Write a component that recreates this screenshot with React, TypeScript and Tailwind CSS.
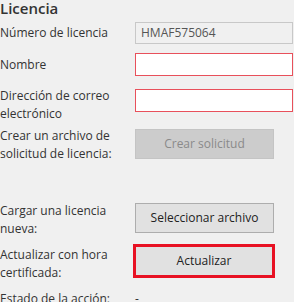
export default function App() {
  const font = { fontFamily: '"Open Sans", "Noto Sans", sans-serif' };
  return (
    <div className="w-[294px] h-[302px] overflow-hidden bg-[#f0f0f0] text-[12px] leading-[18px] text-[#333]" style={font}>
      <h2 className="text-[15px] font-semibold leading-[17px] text-[#333]">Licencia</h2>

      {/* Número de licencia */}
      <div className="flex items-center mt-[5px]">
        <div className="w-[135px] shrink-0">Número de licencia</div>
        <div className="w-[158px] h-[22px] border border-[#c8c8c8] bg-[#f0f0f0] px-[5px] flex items-center text-[#555]">
          HMAF575064
        </div>
      </div>

      {/* Nombre */}
      <div className="flex items-center mt-[9px]">
        <div className="w-[135px] shrink-0">Nombre</div>
        <div className="w-[158px] h-[23px] border border-[#e8505b] bg-white" />
      </div>

      {/* Dirección */}
      <div className="flex items-start mt-[13px]">
        <div className="w-[135px] shrink-0 -mt-[2px]">Dirección de correo electrónico</div>
        <div className="w-[158px] h-[23px] border border-[#e8505b] bg-white" />
      </div>

      {/* Crear solicitud */}
      <div className="flex items-start mt-[6px]">
        <div className="w-[135px] shrink-0 -mt-[2px]">Crear un archivo de solicitud de licencia:</div>
        <button className="w-[139px] h-[30px] bg-[#cccccc] border border-[#c4c4c4] text-[#8a8a8a]">Crear solicitud</button>
      </div>

      {/* Cargar */}
      <div className="flex items-start mt-[40px]">
        <div className="w-[135px] shrink-0 -mt-[1px]">Cargar una licencia nueva:</div>
        <button className="w-[139px] h-[30px] bg-[#e1e1e1] border border-[#adadad] text-[#222]">Seleccionar archivo</button>
      </div>

      {/* Actualizar */}
      <div className="flex items-start mt-[6px]">
        <div className="w-[133px] shrink-0 mt-[2px]">Actualizar con hora certificada:</div>
        <button className="w-[142px] h-[34px] bg-[#e1e1e1] border-[3px] border-[#e81123] text-[#222]">Actualizar</button>
      </div>

      {/* Estado */}
      <div className="flex items-start mt-[8px]">
        <div className="w-[135px] shrink-0">Estado de la acción:</div>
        <div>-</div>
      </div>
    </div>
  );
}
